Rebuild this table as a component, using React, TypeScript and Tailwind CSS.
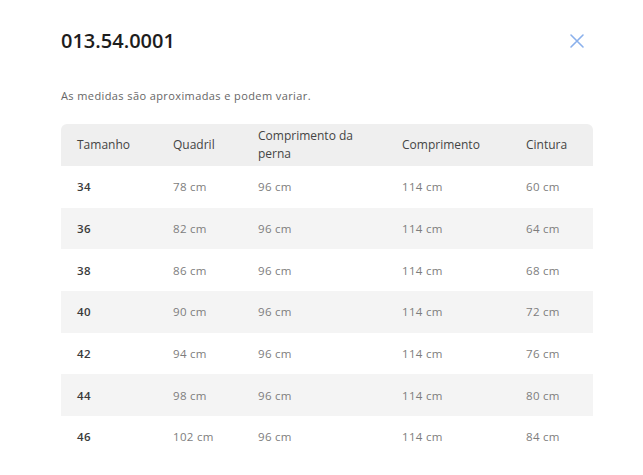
import React from 'react';

const rows = [
  { size: '34', quadril: '78 cm', perna: '96 cm', comp: '114 cm', cintura: '60 cm' },
  { size: '36', quadril: '82 cm', perna: '96 cm', comp: '114 cm', cintura: '64 cm' },
  { size: '38', quadril: '86 cm', perna: '96 cm', comp: '114 cm', cintura: '68 cm' },
  { size: '40', quadril: '90 cm', perna: '96 cm', comp: '114 cm', cintura: '72 cm' },
  { size: '42', quadril: '94 cm', perna: '96 cm', comp: '114 cm', cintura: '76 cm' },
  { size: '44', quadril: '98 cm', perna: '96 cm', comp: '114 cm', cintura: '80 cm' },
  { size: '46', quadril: '102 cm', perna: '96 cm', comp: '114 cm', cintura: '84 cm' },
];

const cols = 'grid grid-cols-[96px_85px_144px_124px_83px]';

export default function App() {
  return (
    <div
      className="w-[643px] h-[475px] bg-white overflow-hidden pl-[61px] pr-[50px] pt-[28px]"
      style={{ fontFamily: '"Open Sans", "Liberation Sans", sans-serif' }}
    >
      <div className="flex items-center justify-between">
        <h2 className="text-[20px] leading-[26px] font-semibold text-[#1d1d1d]">013.54.0001</h2>
        <button className="mr-[8px] text-[#8ab0ec]" aria-label="Fechar">
          <svg width="16" height="16" viewBox="0 0 16 16" fill="none" stroke="currentColor" strokeWidth="1.6" strokeLinecap="round">
            <path d="M2 2L14 14M14 2L2 14" />
          </svg>
        </button>
      </div>

      <p className="mt-[34px] text-[11px] leading-[16px] tracking-[0.4px] text-[#666]">As medidas são aproximadas e podem variar.</p>

      <div className="mt-[20px] w-[532px]">
        <div className={`${cols} h-[42px] items-center bg-[#efefef] rounded-t-[6px] text-[12px] leading-[18px] text-[#444]`}>
          <div className="pl-[16px]">Tamanho</div>
          <div className="pl-[16px]">Quadril</div>
          <div className="pl-[16px] pr-[20px]">Comprimento da perna</div>
          <div className="pl-[16px]">Comprimento</div>
          <div className="pl-[16px]">Cintura</div>
        </div>
        {rows.map((r, i) => (
          <div
            key={r.size}
            className={`${cols} h-[41.7px] items-center text-[11.5px] tracking-[0.3px] ${i % 2 === 1 ? 'bg-[#f4f4f4]' : 'bg-white'}`}
          >
            <div className="pl-[16px] font-semibold text-[#3a3a3a]">{r.size}</div>
            <div className="pl-[16px] text-[#7d7d7d]">{r.quadril}</div>
            <div className="pl-[16px] text-[#7d7d7d]">{r.perna}</div>
            <div className="pl-[16px] text-[#7d7d7d]">{r.comp}</div>
            <div className="pl-[16px] text-[#7d7d7d]">{r.cintura}</div>
          </div>
        ))}
      </div>
    </div>
  );
}
